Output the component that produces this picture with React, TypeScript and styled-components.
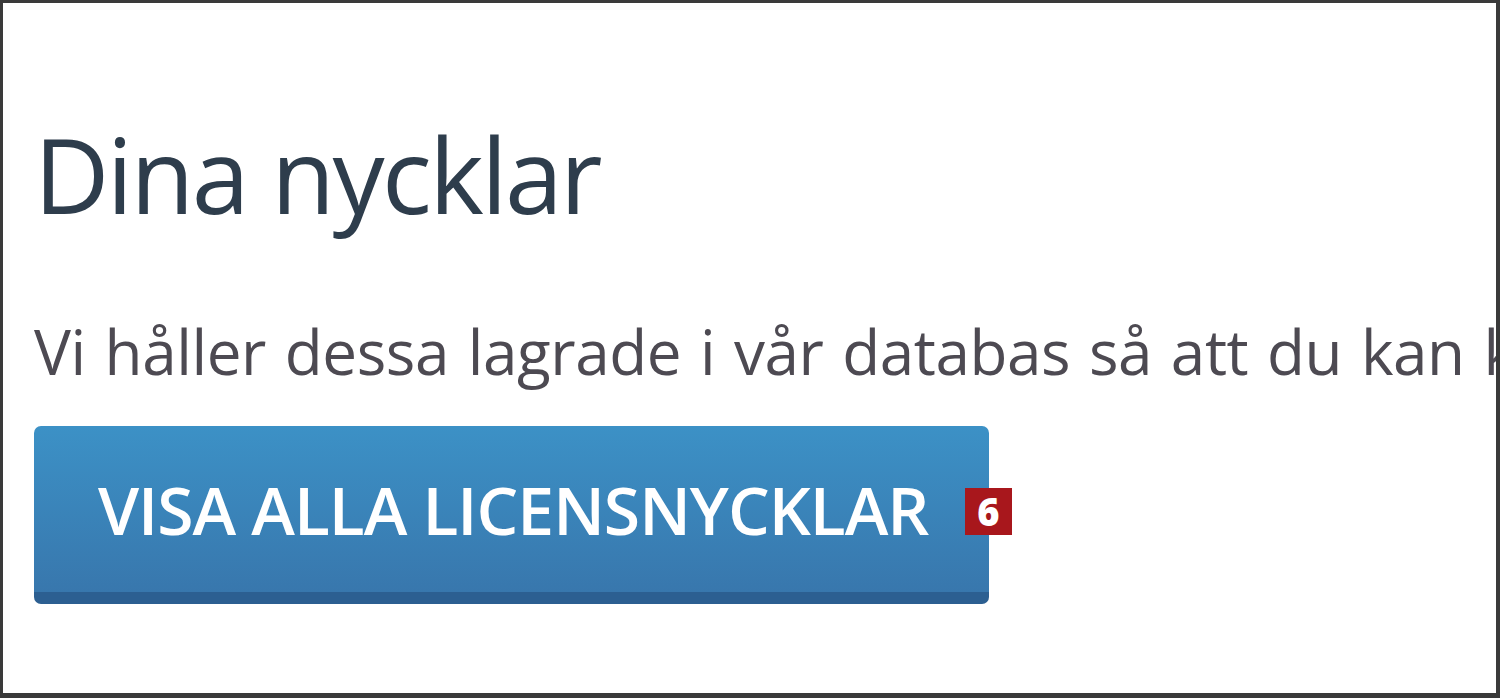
import styled, { createGlobalStyle } from "styled-components";

const Global = createGlobalStyle`
  html, body {
    margin: 0;
    padding: 0;
    background: #fff;
  }
`;

const Frame = styled.div`
  box-sizing: border-box;
  width: 1500px;
  height: 698px;
  border: 3px solid #3a3a3a;
  border-right-width: 4px;
  border-bottom-width: 5px;
  overflow: hidden;
  padding: 0 0 0 31px;
  font-family: "Open Sans", "Noto Sans", sans-serif;
  background: #fff;
`;

const Title = styled.h1`
  margin: 96px 0 0 0;
  font-size: 104px;
  font-weight: 400;
  line-height: 150px;
  letter-spacing: -2.6px;
  color: #2e3d4c;
  white-space: nowrap;
`;

const Lead = styled.p`
  margin: 57px 0 0 0;
  font-size: 62px;
  font-weight: 400;
  line-height: 90px;
  letter-spacing: -0.4px;
  word-spacing: 3px;
  color: #4d4a52;
  white-space: nowrap;
`;

const Button = styled.button`
  position: relative;
  box-sizing: border-box;
  margin-top: 30px;
  width: 955px;
  height: 178px;
  padding: 0 0 0 64px;
  border: 0;
  border-bottom: 12px solid #2c5f91;
  border-radius: 7px;
  background: linear-gradient(#3c91c6, #3877ad);
  color: #fff;
  font-family: inherit;
  font-size: 66px;
  font-weight: 600;
  text-align: left;
  letter-spacing: -1px;
  overflow: visible;
`;

const Badge = styled.span`
  position: absolute;
  left: 931px;
  top: 62px;
  width: 47px;
  height: 47px;
  background: #a8171c;
  color: #fff;
  font-size: 38px;
  font-weight: 800;
  line-height: 47px;
  text-align: center;
  letter-spacing: 0;
`;

export default function App() {
  return (
    <>
      <Global />
      <Frame>
        <Title>Dina nycklar</Title>
        <Lead>Vi håller dessa lagrade i vår databas så att du kan komma åt dem när som helst.</Lead>
        <Button>
          VISA ALLA LICENSNYCKLAR
          <Badge>6</Badge>
        </Button>
      </Frame>
    </>
  );
}
